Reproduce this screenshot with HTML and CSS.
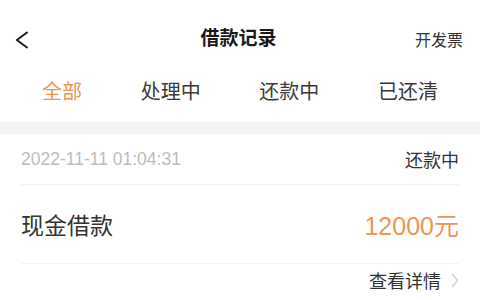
FILE: index.html
```html
<!DOCTYPE html>
<html lang="zh-CN">
<head>
<meta charset="utf-8">
<title>借款记录</title>
<link rel="stylesheet" href="styles.css">
</head>
<body>
<div class="page">
  <header class="nav">
    <div class="nav-left">
      <svg class="back" width="16" height="20" viewBox="0 0 16 20"><polyline points="13,2.5 2.8,10 13,17.5" fill="none" stroke="#222" stroke-width="2.1" stroke-linecap="round" stroke-linejoin="round"/></svg>
    </div>
    <h1 class="title">借款记录</h1>
    <div class="nav-right">开发票</div>
  </header>
  <nav class="tabs">
    <span class="tab active">全部</span>
    <span class="tab">处理中</span>
    <span class="tab">还款中</span>
    <span class="tab">已还清</span>
  </nav>
  <div class="band"></div>
  <section class="card">
    <div class="row row-date">
      <span class="date">2022-11-11 01:04:31</span>
      <span class="status">还款中</span>
    </div>
    <div class="row row-main">
      <span class="name">现金借款</span>
      <span class="amount">12000元</span>
    </div>
    <div class="row row-detail">
      <span class="detail">查看详情
        <svg class="chev" width="8" height="15" viewBox="0 0 8 15"><polyline points="1.5,1.5 6.5,7.5 1.5,13.5" fill="none" stroke="#cfcfcf" stroke-width="1.3" stroke-linecap="round" stroke-linejoin="round"/></svg>
      </span>
    </div>
  </section>
</div>
</body>
</html>
```
FILE: styles.css
```css
* { box-sizing: border-box; }
html, body { margin: 0; padding: 0; background: #fff; }
body {
  font-family: "Liberation Sans", "Noto Sans CJK SC", sans-serif;
  color: #333;
  width: 480px;
  height: 300px;
  overflow: hidden;
}
.page { width: 480px; }

.nav {
  display: grid;
  grid-template-columns: 1fr auto 1fr;
  align-items: center;
  height: 58px;
  padding: 20px 17px 0 14px;
}
.nav-left { display: flex; align-items: center; padding-top: 2px; }
.back { display: block; }
.title {
  margin: 0;
  font-size: 19px;
  font-weight: 700;
  color: #1a1a1a;
  line-height: 38px;
}
.nav-right {
  justify-self: end;
  font-size: 16px;
  color: #333;
}

.tabs {
  display: flex;
  justify-content: space-between;
  align-items: center;
  height: 64px;
  padding: 0 42px;
}
.tab {
  font-size: 20px;
  color: #3a3a3a;
}
.tab.active { color: #ec9554; }

.band {
  height: 12px;
  background: #f4f4f4;
}

.card { padding: 0 21px; }
.row {
  display: flex;
  justify-content: space-between;
  align-items: center;
}
.row-date {
  height: 51px;
  border-bottom: 1px solid #f0f0f0;
}
.date { font-size: 17.5px; color: #bdbdbd; }
.status { font-size: 18px; color: #333; }

.row-main {
  height: 79px;
  border-bottom: 1px solid #f3f3f3;
}
.name { font-size: 23px; color: #333; }
.amount { font-size: 25px; color: #ef9553; }

.row-detail {
  height: 32px;
  justify-content: flex-end;
}
.detail {
  display: flex;
  align-items: center;
  gap: 10px;
  font-size: 18px;
  color: #333;
}
.chev { display: block; }
```
